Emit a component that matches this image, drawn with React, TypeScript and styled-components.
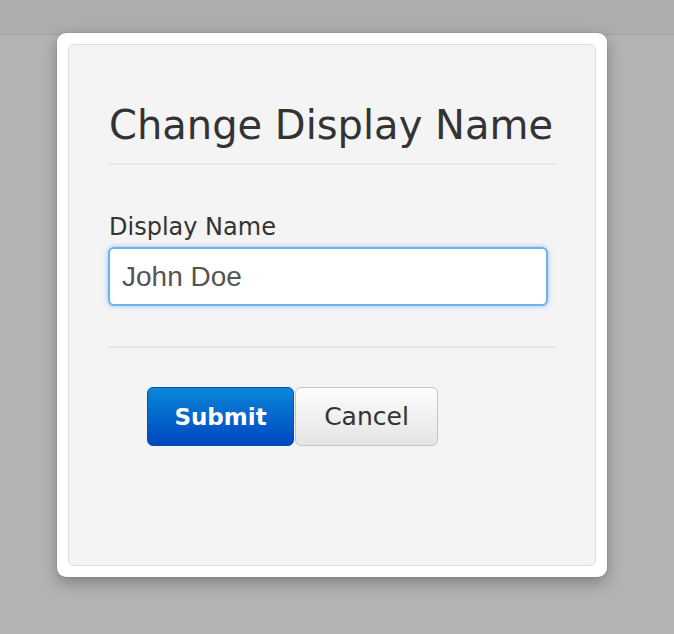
import React from 'react';
import styled, { createGlobalStyle } from 'styled-components';

const GlobalStyle = createGlobalStyle`
  html, body {
    margin: 0;
    padding: 0;
    background: #b3b3b3;
    font-family: "DejaVu Sans", "Noto Sans", sans-serif;
  }
`;

const Page = styled.div`
  position: relative;
  width: 674px;
  height: 634px;
  overflow: hidden;
`;

const TopBar = styled.div`
  height: 34px;
  background: #adadad;
  border-bottom: 1px solid #a3a3a3;
`;

const Modal = styled.div`
  position: absolute;
  left: 57px;
  top: 33px;
  width: 550px;
  height: 544px;
  box-sizing: border-box;
  padding: 11px;
  background: #fff;
  border-radius: 9px;
  box-shadow: 0 6px 16px rgba(0, 0, 0, 0.28), 0 0 2px rgba(0, 0, 0, 0.2);
`;

const Panel = styled.div`
  height: 100%;
  box-sizing: border-box;
  background: #f4f4f4;
  border: 1px solid #dedede;
  border-radius: 6px;
  padding: 52px 39px 0 40px;
`;

const Title = styled.h2`
  margin: 0;
  font-size: 40px;
  font-weight: normal;
  line-height: 56px;
  color: #333;
  padding-bottom: 10px;
  border-bottom: 2px solid #e6e6e6;
`;

const Field = styled.div`
  display: flex;
  flex-direction: column;
  padding: 46px 0 40px;
  border-bottom: 2px solid #e6e6e6;
`;

const Label = styled.label`
  font-size: 24px;
  line-height: 32px;
  color: #333;
  margin-bottom: 4px;
`;

const Input = styled.input`
  width: 440px;
  height: 59px;
  margin-left: -1px;
  box-sizing: border-box;
  border: 2px solid #6ab3f3;
  border-radius: 6px;
  padding: 0 12px;
  background: #fff;
  font-family: "Liberation Sans", Arial, sans-serif;
  font-size: 28px;
  color: #555;
  outline: none;
  box-shadow: 0 0 5px rgba(80, 155, 235, 0.6);
`;

const Actions = styled.div`
  display: flex;
  gap: 1px;
  padding: 39px 0 0 38px;
`;

const Button = styled.button<{ $primary?: boolean }>`
  height: 59px;
  box-sizing: border-box;
  border-radius: 6px;
  font-family: "DejaVu Sans", sans-serif;
  font-size: ${(p) => (p.$primary ? '23px' : '25px')};
  font-weight: ${(p) => (p.$primary ? 'bold' : 'normal')};
  width: ${(p) => (p.$primary ? '147px' : '143px')};
  color: ${(p) => (p.$primary ? '#fff' : '#333')};
  border: 1px solid ${(p) => (p.$primary ? '#0050b4' : '#c4c4c4')};
  background: ${(p) =>
    p.$primary
      ? 'linear-gradient(#0a88d9, #0046bf)'
      : 'linear-gradient(#fdfdfd, #e4e4e4)'};
  cursor: pointer;
`;

export default function App() {
  return (
    <Page>
      <GlobalStyle />
      <TopBar />
      <Modal>
        <Panel>
          <Title>Change Display Name</Title>
          <Field>
            <Label htmlFor="display-name">Display Name</Label>
            <Input id="display-name" defaultValue="John Doe" />
          </Field>
          <Actions>
            <Button $primary>Submit</Button>
            <Button>Cancel</Button>
          </Actions>
        </Panel>
      </Modal>
    </Page>
  );
}
